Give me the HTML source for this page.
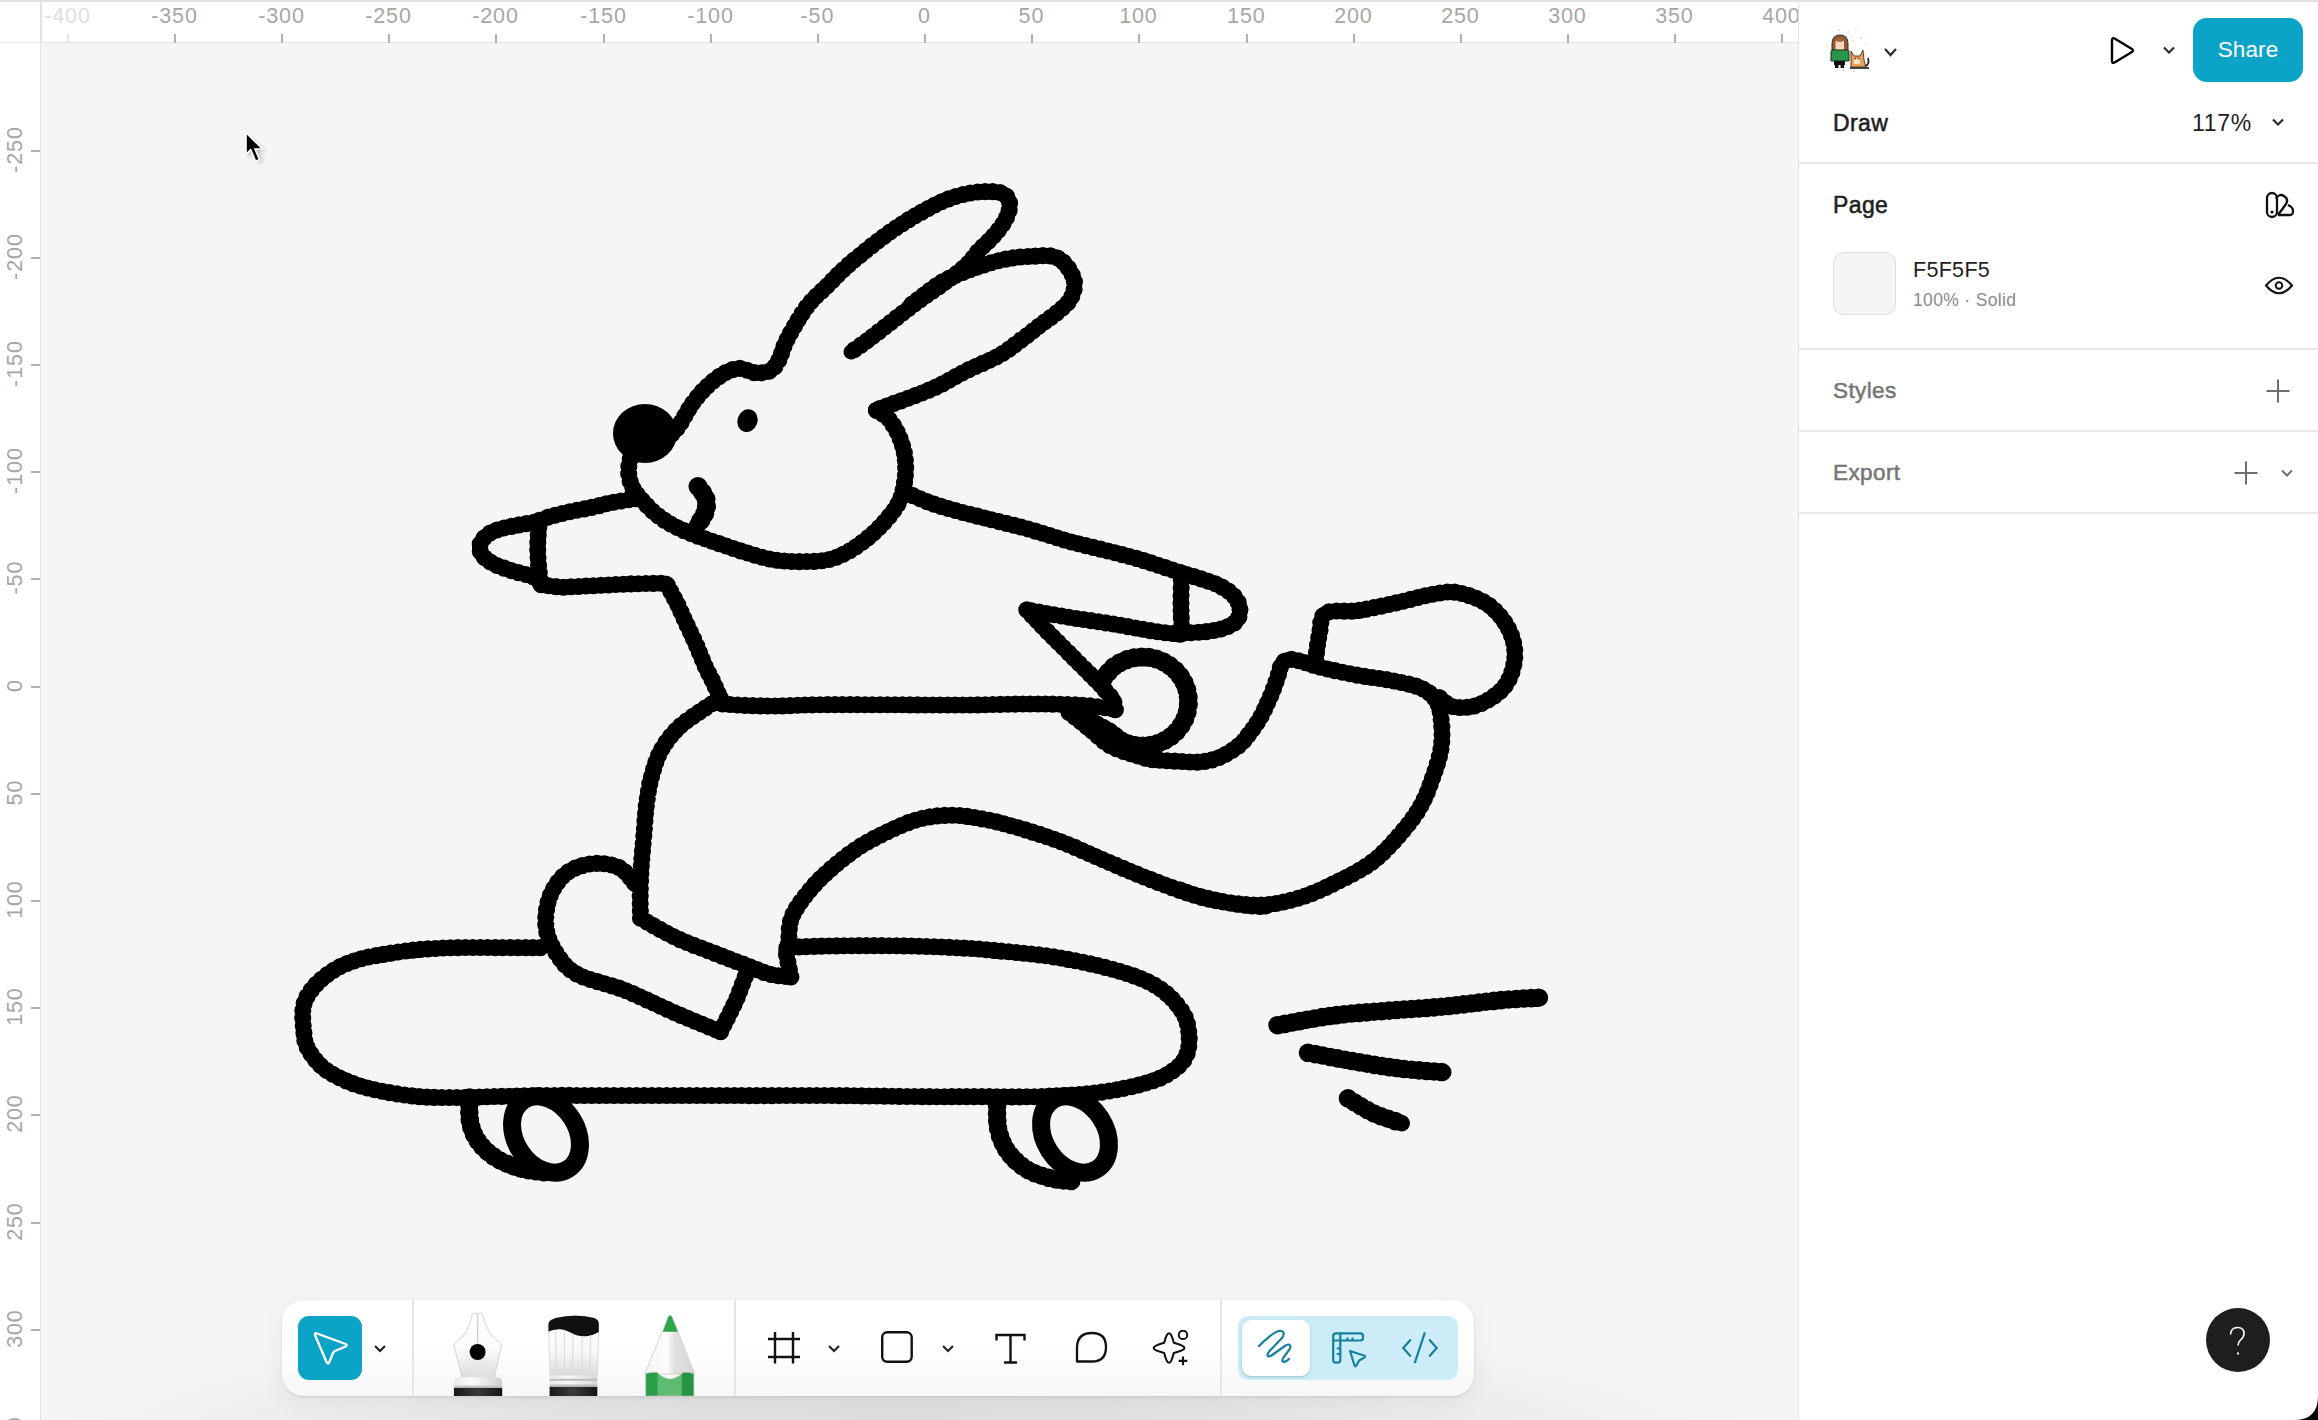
<!DOCTYPE html>
<html><head><meta charset="utf-8">
<style>
*{box-sizing:border-box;margin:0;padding:0}
html,body{width:2318px;height:1420px;overflow:hidden;background:#f5f5f5;font-family:"Liberation Sans",sans-serif;position:relative}
.abs{position:absolute}
#topline{left:0;top:0;width:2318px;height:2px;background:#e2e2e2}
#hruler{left:0;top:2px;width:1798px;height:41px;background:#fff;border-bottom:1.5px solid #e3e3e3}
#vruler{left:0;top:43px;width:41px;height:1377px;background:#fff;border-right:1.5px solid #e3e3e3}
.hl{position:absolute;top:3px;font-size:21.5px;color:#a6a6a6;transform:translateX(-50%);white-space:nowrap;line-height:22px;letter-spacing:0.9px;text-indent:0.9px}
.ht{position:absolute;top:32px;width:1.5px;height:9px;background:#b0b0b0}
.vl{position:absolute;left:15px;font-size:21.5px;color:#a6a6a6;white-space:nowrap;line-height:22px;letter-spacing:0.9px;text-indent:0.9px;transform:translate(-50%,-50%) rotate(-90deg)}
.vt{position:absolute;left:31px;height:1.5px;width:9px;background:#b0b0b0}
.draw{position:absolute;left:0;top:0}
#panel{left:1798px;top:2px;width:520px;height:1418px;background:#fff;border-left:1.5px solid #e3e3e3}
.div{position:absolute;left:0;width:520px;height:2px;background:#e8e8e8}
.ptxt{position:absolute;white-space:nowrap;line-height:1}
#toolbar{left:282px;top:1300px;width:1192px;height:96px;background:linear-gradient(#fff 45%,#f7f7f7);border-radius:22px;box-shadow:0 1px 3px rgba(0,0,0,0.10),0 6px 24px rgba(0,0,0,0.06)}
#tshadow{left:40px;top:1290px;width:1720px;height:260px;background:radial-gradient(ellipse 50% 50% at 50% 58%,rgba(0,0,0,0.11) 0%,rgba(0,0,0,0.065) 45%,rgba(0,0,0,0) 100%)}
.sb{font-weight:400;-webkit-text-stroke:0.55px currentColor}
.tdiv{position:absolute;top:0;width:1.5px;height:96px;background:#e6e6e6}
</style></head><body>
<div id="topline" class="abs"></div>
<div class="abs" style="left:40px;top:2px;width:1.5px;height:41px;background:#e3e3e3;z-index:2"></div>
<div id="hruler" class="abs">
<span class="hl" style="left:67px;color:#dedede">-400</span>
<span class="hl" style="left:174px">-350</span>
<span class="hl" style="left:281px">-300</span>
<span class="hl" style="left:388px">-250</span>
<span class="hl" style="left:495px">-200</span>
<span class="hl" style="left:603px">-150</span>
<span class="hl" style="left:710px">-100</span>
<span class="hl" style="left:817px">-50</span>
<span class="hl" style="left:924px">0</span>
<span class="hl" style="left:1031px">50</span>
<span class="hl" style="left:1138px">100</span>
<span class="hl" style="left:1246px">150</span>
<span class="hl" style="left:1353px">200</span>
<span class="hl" style="left:1460px">250</span>
<span class="hl" style="left:1567px">300</span>
<span class="hl" style="left:1674px">350</span>
<span class="hl" style="left:1781px">400</span>
<div class="ht" style="left:67px;background:#e4e4e4"></div>
<div class="ht" style="left:174px"></div>
<div class="ht" style="left:281px"></div>
<div class="ht" style="left:388px"></div>
<div class="ht" style="left:495px"></div>
<div class="ht" style="left:603px"></div>
<div class="ht" style="left:710px"></div>
<div class="ht" style="left:817px"></div>
<div class="ht" style="left:924px"></div>
<div class="ht" style="left:1031px"></div>
<div class="ht" style="left:1138px"></div>
<div class="ht" style="left:1246px"></div>
<div class="ht" style="left:1353px"></div>
<div class="ht" style="left:1460px"></div>
<div class="ht" style="left:1567px"></div>
<div class="ht" style="left:1674px"></div>
<div class="ht" style="left:1781px"></div>
</div>
<div id="vruler" class="abs">
<span class="vl" style="top:107px">-250</span>
<span class="vl" style="top:214px">-200</span>
<span class="vl" style="top:321px">-150</span>
<span class="vl" style="top:428px">-100</span>
<span class="vl" style="top:535px">-50</span>
<span class="vl" style="top:643px">0</span>
<span class="vl" style="top:750px">50</span>
<span class="vl" style="top:857px">100</span>
<span class="vl" style="top:964px">150</span>
<span class="vl" style="top:1071px">200</span>
<span class="vl" style="top:1179px">250</span>
<span class="vl" style="top:1286px">300</span>
<span class="vl" style="top:1393px">350</span>
<div class="vt" style="top:107px"></div>
<div class="vt" style="top:214px"></div>
<div class="vt" style="top:321px"></div>
<div class="vt" style="top:428px"></div>
<div class="vt" style="top:535px"></div>
<div class="vt" style="top:643px"></div>
<div class="vt" style="top:750px"></div>
<div class="vt" style="top:857px"></div>
<div class="vt" style="top:964px"></div>
<div class="vt" style="top:1071px"></div>
<div class="vt" style="top:1179px"></div>
<div class="vt" style="top:1286px"></div>
</div>

<svg class="draw" width="2318" height="1420" viewBox="0 0 2318 1420"><g fill="none" stroke="#000" stroke-linecap="round" stroke-linejoin="round"><path d="M672.0 434.0 C673.3 432.4 676.3 429.7 679.8 424.5 C683.3 419.3 688.1 409.5 692.8 403.0 C697.5 396.5 702.5 390.7 707.9 385.7 C713.3 380.7 719.7 375.7 725.1 372.8 C730.5 369.9 735.2 368.4 740.2 368.4 C745.2 368.4 750.3 372.4 755.3 372.8 C760.3 373.2 766.4 372.8 770.4 370.6 C774.4 368.4 776.5 364.5 779.0 359.8 C781.5 355.1 782.6 348.7 785.5 342.6 C788.4 336.5 792.3 329.6 796.3 323.1 C800.2 316.6 804.2 309.8 809.2 303.7 C814.2 297.6 820.8 292.2 826.5 286.5 C832.2 280.8 838.3 274.2 843.7 269.2 C849.1 264.2 852.7 261.3 858.8 256.3 C864.9 251.3 873.2 244.4 880.4 239.0 C887.6 233.6 894.8 228.6 902.0 223.9 C909.2 219.2 916.4 214.9 923.6 211.0 C930.8 207.1 937.9 203.1 945.1 200.2 C952.3 197.3 959.9 195.1 966.7 193.7 C973.5 192.3 980.0 191.6 986.1 191.6 C992.2 191.6 999.5 191.5 1003.4 193.7 C1007.3 195.8 1009.4 200.2 1009.8 204.5 C1010.1 208.8 1008.0 214.6 1005.5 219.6 C1003.0 224.6 999.0 229.7 994.7 234.7 C990.4 239.7 984.3 244.8 979.6 249.8 C974.9 254.8 972.5 259.5 966.7 264.9 C961.0 270.3 952.3 276.8 945.1 282.2 C937.9 287.6 930.1 292.6 923.6 297.3 C917.1 302.0 912.4 305.5 906.3 310.2 C900.2 314.9 893.4 320.3 886.9 325.3 C880.4 330.3 873.5 335.9 867.5 340.4 C861.5 344.8 853.8 350.1 851.0 352.0" stroke-width="14.9"/><path d="M672.0 434.0 C673.3 432.4 676.3 429.7 679.8 424.5 C683.3 419.3 688.1 409.5 692.8 403.0 C697.5 396.5 702.5 390.7 707.9 385.7 C713.3 380.7 719.7 375.7 725.1 372.8 C730.5 369.9 735.2 368.4 740.2 368.4 C745.2 368.4 750.3 372.4 755.3 372.8 C760.3 373.2 766.4 372.8 770.4 370.6 C774.4 368.4 776.5 364.5 779.0 359.8 C781.5 355.1 782.6 348.7 785.5 342.6 C788.4 336.5 792.3 329.6 796.3 323.1 C800.2 316.6 804.2 309.8 809.2 303.7 C814.2 297.6 820.8 292.2 826.5 286.5 C832.2 280.8 838.3 274.2 843.7 269.2 C849.1 264.2 852.7 261.3 858.8 256.3 C864.9 251.3 873.2 244.4 880.4 239.0 C887.6 233.6 894.8 228.6 902.0 223.9 C909.2 219.2 916.4 214.9 923.6 211.0 C930.8 207.1 937.9 203.1 945.1 200.2 C952.3 197.3 959.9 195.1 966.7 193.7 C973.5 192.3 980.0 191.6 986.1 191.6 C992.2 191.6 999.5 191.5 1003.4 193.7 C1007.3 195.8 1009.4 200.2 1009.8 204.5 C1010.1 208.8 1008.0 214.6 1005.5 219.6 C1003.0 224.6 999.0 229.7 994.7 234.7 C990.4 239.7 984.3 244.8 979.6 249.8 C974.9 254.8 972.5 259.5 966.7 264.9 C961.0 270.3 952.3 276.8 945.1 282.2 C937.9 287.6 930.1 292.6 923.6 297.3 C917.1 302.0 912.4 305.5 906.3 310.2 C900.2 314.9 893.4 320.3 886.9 325.3 C880.4 330.3 873.5 335.9 867.5 340.4 C861.5 344.8 853.8 350.1 851.0 352.0" stroke-width="17.1" stroke-dasharray="0 7.5"/>
<path d="M912.0 304.0 C917.0 300.3 932.8 287.5 941.9 282.0 C951.0 276.5 959.0 274.1 966.7 271.0 C974.4 267.9 981.1 265.6 988.3 263.5 C995.5 261.4 1002.6 259.6 1009.8 258.4 C1017.0 257.2 1024.2 256.6 1031.4 256.3 C1038.6 256.0 1047.2 254.9 1053.0 256.3 C1058.8 257.7 1062.3 260.6 1065.9 264.9 C1069.5 269.2 1073.8 276.4 1074.5 282.2 C1075.2 287.9 1073.1 294.4 1070.2 299.4 C1067.3 304.4 1062.3 308.1 1057.3 312.4 C1052.3 316.7 1046.1 320.6 1040.0 325.3 C1033.9 330.0 1027.4 335.4 1020.6 340.4 C1013.8 345.4 1008.0 350.5 999.0 355.5 C990.0 360.5 976.8 365.6 966.7 370.6 C956.7 375.6 947.7 381.4 938.7 385.7 C929.7 390.0 921.1 393.3 912.8 396.5 C904.5 399.7 895.2 402.9 889.0 405.1 C882.8 407.3 877.8 409.1 875.5 409.9" stroke-width="14.9"/><path d="M912.0 304.0 C917.0 300.3 932.8 287.5 941.9 282.0 C951.0 276.5 959.0 274.1 966.7 271.0 C974.4 267.9 981.1 265.6 988.3 263.5 C995.5 261.4 1002.6 259.6 1009.8 258.4 C1017.0 257.2 1024.2 256.6 1031.4 256.3 C1038.6 256.0 1047.2 254.9 1053.0 256.3 C1058.8 257.7 1062.3 260.6 1065.9 264.9 C1069.5 269.2 1073.8 276.4 1074.5 282.2 C1075.2 287.9 1073.1 294.4 1070.2 299.4 C1067.3 304.4 1062.3 308.1 1057.3 312.4 C1052.3 316.7 1046.1 320.6 1040.0 325.3 C1033.9 330.0 1027.4 335.4 1020.6 340.4 C1013.8 345.4 1008.0 350.5 999.0 355.5 C990.0 360.5 976.8 365.6 966.7 370.6 C956.7 375.6 947.7 381.4 938.7 385.7 C929.7 390.0 921.1 393.3 912.8 396.5 C904.5 399.7 895.2 402.9 889.0 405.1 C882.8 407.3 877.8 409.1 875.5 409.9" stroke-width="17.1" stroke-dasharray="0 7.5"/>
<path d="M630.3 459.0 C630.0 461.1 628.2 467.2 628.5 471.8 C628.8 476.4 630.0 481.9 632.1 486.5 C634.2 491.1 637.3 494.7 641.3 499.3 C645.3 503.9 650.7 509.7 655.9 514.0 C661.1 518.3 666.3 521.6 672.4 525.0 C678.5 528.4 684.9 531.1 692.5 534.1 C700.1 537.1 709.4 540.2 718.2 543.3 C727.1 546.3 736.5 549.7 745.6 552.4 C754.8 555.1 763.9 558.2 773.1 559.7 C782.3 561.2 791.5 561.6 800.6 561.6 C809.8 561.6 819.8 561.5 828.0 559.7 C836.2 557.9 843.0 554.6 850.0 550.6 C857.0 546.6 864.1 541.1 870.2 535.9 C876.3 530.7 881.7 525.3 886.6 519.5 C891.5 513.7 896.4 507.8 899.5 501.1 C902.6 494.4 904.1 486.5 905.0 479.2 C905.9 471.9 905.9 464.2 905.0 457.2 C904.1 450.2 902.2 443.5 899.5 437.1 C896.8 430.7 892.5 423.2 888.5 418.7 C884.5 414.2 877.7 411.4 875.5 409.9" stroke-width="14.9"/><path d="M630.3 459.0 C630.0 461.1 628.2 467.2 628.5 471.8 C628.8 476.4 630.0 481.9 632.1 486.5 C634.2 491.1 637.3 494.7 641.3 499.3 C645.3 503.9 650.7 509.7 655.9 514.0 C661.1 518.3 666.3 521.6 672.4 525.0 C678.5 528.4 684.9 531.1 692.5 534.1 C700.1 537.1 709.4 540.2 718.2 543.3 C727.1 546.3 736.5 549.7 745.6 552.4 C754.8 555.1 763.9 558.2 773.1 559.7 C782.3 561.2 791.5 561.6 800.6 561.6 C809.8 561.6 819.8 561.5 828.0 559.7 C836.2 557.9 843.0 554.6 850.0 550.6 C857.0 546.6 864.1 541.1 870.2 535.9 C876.3 530.7 881.7 525.3 886.6 519.5 C891.5 513.7 896.4 507.8 899.5 501.1 C902.6 494.4 904.1 486.5 905.0 479.2 C905.9 471.9 905.9 464.2 905.0 457.2 C904.1 450.2 902.2 443.5 899.5 437.1 C896.8 430.7 892.5 423.2 888.5 418.7 C884.5 414.2 877.7 411.4 875.5 409.9" stroke-width="17.1" stroke-dasharray="0 7.5"/>
<path d="M698.0 486.5 C699.3 488.6 704.8 494.6 706.0 499.0 C707.2 503.4 706.5 508.5 705.0 513.0 C703.5 517.5 698.3 523.8 697.0 526.0" stroke-width="16.9"/><path d="M698.0 486.5 C699.3 488.6 704.8 494.6 706.0 499.0 C707.2 503.4 706.5 508.5 705.0 513.0 C703.5 517.5 698.3 523.8 697.0 526.0" stroke-width="19.1" stroke-dasharray="0 7.5"/>
<path d="M635.7 498.6 C631.8 499.2 619.4 501.1 612.1 502.5 C604.8 503.9 599.1 505.7 591.8 507.3 C584.5 508.9 575.4 510.5 568.1 512.1 C560.8 513.8 553.0 515.6 547.9 517.2 C542.8 518.8 543.9 520.0 537.7 521.5 C531.5 523.0 518.3 524.8 510.7 526.5 C503.1 528.2 496.9 529.4 492.0 532.0 C487.1 534.6 482.8 538.5 481.0 542.0 C479.2 545.5 479.2 549.5 481.0 553.0 C482.8 556.5 487.0 560.1 492.0 563.0 C497.0 565.9 503.9 568.1 511.0 570.5 C518.1 572.9 529.4 574.8 534.4 577.2 C539.4 579.6 540.0 583.5 541.1 584.8" stroke-width="14.9"/><path d="M635.7 498.6 C631.8 499.2 619.4 501.1 612.1 502.5 C604.8 503.9 599.1 505.7 591.8 507.3 C584.5 508.9 575.4 510.5 568.1 512.1 C560.8 513.8 553.0 515.6 547.9 517.2 C542.8 518.8 543.9 520.0 537.7 521.5 C531.5 523.0 518.3 524.8 510.7 526.5 C503.1 528.2 496.9 529.4 492.0 532.0 C487.1 534.6 482.8 538.5 481.0 542.0 C479.2 545.5 479.2 549.5 481.0 553.0 C482.8 556.5 487.0 560.1 492.0 563.0 C497.0 565.9 503.9 568.1 511.0 570.5 C518.1 572.9 529.4 574.8 534.4 577.2 C539.4 579.6 540.0 583.5 541.1 584.8" stroke-width="17.1" stroke-dasharray="0 7.5"/>
<path d="M539.4 520.2 C539.1 524.8 537.7 538.5 537.7 547.6 C537.7 556.7 538.8 568.5 539.4 574.6 C540.0 580.7 540.8 582.5 541.1 584.1" stroke-width="14.9"/><path d="M539.4 520.2 C539.1 524.8 537.7 538.5 537.7 547.6 C537.7 556.7 538.8 568.5 539.4 574.6 C540.0 580.7 540.8 582.5 541.1 584.1" stroke-width="17.1" stroke-dasharray="0 7.5"/>
<path d="M541.1 584.8 L561.4 587.3 L595.2 585.6 L629.0 583.9 L666.2 583.1 L676.3 601.7 L686.4 623.6 L696.6 645.6 L705.0 665.9 L713.5 682.8 L720.2 698.0" stroke-width="14.9"/><path d="M541.1 584.8 L561.4 587.3 L595.2 585.6 L629.0 583.9 L666.2 583.1 L676.3 601.7 L686.4 623.6 L696.6 645.6 L705.0 665.9 L713.5 682.8 L720.2 698.0" stroke-width="17.1" stroke-dasharray="0 7.5"/>
<path d="M906.3 492.7 C909.9 494.2 920.7 499.3 928.0 502.0 C935.3 504.7 940.6 506.3 950.0 509.0 C959.4 511.7 971.7 514.7 984.5 518.0 C997.3 521.3 1012.7 524.7 1026.8 528.6 C1040.9 532.5 1054.9 537.4 1069.0 541.3 C1083.1 545.2 1099.0 548.6 1111.3 551.8 C1123.6 555.0 1131.7 556.9 1143.0 560.3 C1154.3 563.7 1169.4 569.0 1178.9 572.0 C1188.4 575.0 1193.5 576.3 1200.0 578.5 C1206.5 580.7 1212.7 582.4 1218.0 585.0 C1223.3 587.6 1228.4 590.5 1232.0 594.0 C1235.6 597.5 1238.5 601.8 1239.5 606.0 C1240.5 610.2 1240.1 615.5 1238.0 619.0 C1235.9 622.5 1232.0 624.9 1226.9 627.0 C1221.8 629.1 1214.8 630.5 1207.5 631.5 C1200.2 632.5 1187.1 632.8 1183.0 633.0" stroke-width="14.9"/><path d="M906.3 492.7 C909.9 494.2 920.7 499.3 928.0 502.0 C935.3 504.7 940.6 506.3 950.0 509.0 C959.4 511.7 971.7 514.7 984.5 518.0 C997.3 521.3 1012.7 524.7 1026.8 528.6 C1040.9 532.5 1054.9 537.4 1069.0 541.3 C1083.1 545.2 1099.0 548.6 1111.3 551.8 C1123.6 555.0 1131.7 556.9 1143.0 560.3 C1154.3 563.7 1169.4 569.0 1178.9 572.0 C1188.4 575.0 1193.5 576.3 1200.0 578.5 C1206.5 580.7 1212.7 582.4 1218.0 585.0 C1223.3 587.6 1228.4 590.5 1232.0 594.0 C1235.6 597.5 1238.5 601.8 1239.5 606.0 C1240.5 610.2 1240.1 615.5 1238.0 619.0 C1235.9 622.5 1232.0 624.9 1226.9 627.0 C1221.8 629.1 1214.8 630.5 1207.5 631.5 C1200.2 632.5 1187.1 632.8 1183.0 633.0" stroke-width="17.1" stroke-dasharray="0 7.5"/>
<path d="M1181.5 573.0 C1181.4 578.6 1180.9 596.6 1181.0 606.8 C1181.1 617.0 1181.8 629.7 1182.0 634.3" stroke-width="14.9"/><path d="M1181.5 573.0 C1181.4 578.6 1180.9 596.6 1181.0 606.8 C1181.1 617.0 1181.8 629.7 1182.0 634.3" stroke-width="17.1" stroke-dasharray="0 7.5"/>
<path d="M1180.0 634.3 C1175.6 633.8 1165.0 632.9 1153.5 631.1 C1142.0 629.3 1125.4 626.0 1111.3 623.7 C1097.2 621.4 1083.1 619.6 1069.0 617.3 C1054.9 615.0 1033.8 611.1 1026.8 609.9" stroke-width="14.9"/><path d="M1180.0 634.3 C1175.6 633.8 1165.0 632.9 1153.5 631.1 C1142.0 629.3 1125.4 626.0 1111.3 623.7 C1097.2 621.4 1083.1 619.6 1069.0 617.3 C1054.9 615.0 1033.8 611.1 1026.8 609.9" stroke-width="17.1" stroke-dasharray="0 7.5"/>
<path d="M1026.8 609.9 L1047.9 632.1 L1073.3 657.5 L1098.6 682.8 L1113.4 699.7 L1115.5 710.3" stroke-width="14.9"/><path d="M1026.8 609.9 L1047.9 632.1 L1073.3 657.5 L1098.6 682.8 L1113.4 699.7 L1115.5 710.3" stroke-width="17.1" stroke-dasharray="0 7.5"/>
<path d="M720.2 698.0 C719.8 698.9 710.1 702.1 718.0 703.4 C725.9 704.7 750.6 705.8 767.5 706.0 C784.4 706.2 800.9 704.9 819.6 704.7 C838.4 704.5 856.0 704.7 880.0 704.7 C904.0 704.8 938.9 705.1 963.4 705.0 C987.9 704.9 1007.4 704.0 1026.8 704.0 C1046.2 704.0 1064.8 704.1 1079.6 705.0 C1094.4 705.9 1109.5 708.5 1115.5 709.2" stroke-width="14.9"/><path d="M720.2 698.0 C719.8 698.9 710.1 702.1 718.0 703.4 C725.9 704.7 750.6 705.8 767.5 706.0 C784.4 706.2 800.9 704.9 819.6 704.7 C838.4 704.5 856.0 704.7 880.0 704.7 C904.0 704.8 938.9 705.1 963.4 705.0 C987.9 704.9 1007.4 704.0 1026.8 704.0 C1046.2 704.0 1064.8 704.1 1079.6 705.0 C1094.4 705.9 1109.5 708.5 1115.5 709.2" stroke-width="17.1" stroke-dasharray="0 7.5"/>
<path d="M1103.5 677.9 C1105.5 675.8 1110.8 668.8 1115.5 665.5 C1120.2 662.2 1125.8 659.6 1131.4 658.3 C1137.0 656.9 1143.2 656.6 1148.9 657.4 C1154.6 658.2 1160.5 660.2 1165.5 663.0 C1170.5 665.8 1175.2 669.7 1178.7 674.1 C1182.2 678.5 1185.1 683.9 1186.7 689.2 C1188.3 694.6 1188.8 700.7 1188.2 706.2 C1187.6 711.7 1185.8 717.5 1183.1 722.4 C1180.4 727.3 1176.5 732.0 1172.1 735.6 C1167.7 739.2 1162.2 742.1 1156.7 743.8 C1151.2 745.5 1145.0 746.3 1139.3 745.9 C1133.6 745.5 1127.5 743.9 1122.3 741.5 C1117.1 739.1 1115.4 735.5 1108.3 731.3 C1101.2 727.0 1084.4 718.5 1079.6 716.0" stroke-width="16.9"/><path d="M1103.5 677.9 C1105.5 675.8 1110.8 668.8 1115.5 665.5 C1120.2 662.2 1125.8 659.6 1131.4 658.3 C1137.0 656.9 1143.2 656.6 1148.9 657.4 C1154.6 658.2 1160.5 660.2 1165.5 663.0 C1170.5 665.8 1175.2 669.7 1178.7 674.1 C1182.2 678.5 1185.1 683.9 1186.7 689.2 C1188.3 694.6 1188.8 700.7 1188.2 706.2 C1187.6 711.7 1185.8 717.5 1183.1 722.4 C1180.4 727.3 1176.5 732.0 1172.1 735.6 C1167.7 739.2 1162.2 742.1 1156.7 743.8 C1151.2 745.5 1145.0 746.3 1139.3 745.9 C1133.6 745.5 1127.5 743.9 1122.3 741.5 C1117.1 739.1 1115.4 735.5 1108.3 731.3 C1101.2 727.0 1084.4 718.5 1079.6 716.0" stroke-width="19.1" stroke-dasharray="0 7.5"/>
<path d="M1069.0 712.4 C1072.5 715.2 1083.2 723.7 1090.2 729.3 C1097.2 734.9 1102.5 741.5 1111.3 746.2 C1120.1 750.9 1134.9 755.1 1143.0 757.5 C1151.1 759.9 1153.9 759.7 1160.0 760.3 C1166.1 760.9 1173.1 761.0 1179.7 761.3 C1186.3 761.6 1192.8 762.6 1199.4 762.0 C1206.0 761.4 1212.6 760.2 1219.2 757.5 C1225.8 754.8 1233.9 749.5 1238.9 745.5 C1244.0 741.5 1246.1 737.9 1249.5 733.5 C1252.9 729.1 1256.5 724.1 1259.5 719.0 C1262.5 713.9 1265.2 708.0 1267.5 703.0 C1269.8 698.0 1271.7 693.8 1273.5 689.0 C1275.3 684.2 1277.1 678.8 1278.5 674.5 C1279.9 670.2 1280.2 666.0 1282.0 663.5 C1283.8 661.0 1286.5 659.9 1289.5 659.5 C1292.5 659.1 1294.6 659.6 1300.0 661.0 C1305.4 662.4 1312.4 665.2 1322.0 667.6 C1331.6 670.0 1346.1 673.1 1357.5 675.2 C1368.9 677.3 1379.8 678.2 1390.4 680.3 C1401.0 682.4 1413.3 684.5 1420.9 687.9 C1428.5 691.3 1432.7 695.3 1436.1 700.6 C1439.5 705.9 1440.3 711.8 1441.2 719.6 C1442.1 727.4 1442.5 738.2 1441.2 747.5 C1439.9 756.8 1436.9 765.7 1433.5 775.4 C1430.1 785.1 1426.4 796.1 1420.9 805.8 C1415.4 815.5 1408.6 824.4 1400.6 833.7 C1392.6 843.0 1383.3 853.6 1372.7 861.6 C1362.1 869.6 1349.0 876.0 1337.2 881.9 C1325.4 887.8 1313.5 893.3 1301.7 897.1 C1289.9 900.9 1278.0 903.7 1266.2 904.7 C1254.4 905.7 1241.7 904.3 1230.7 903.0 C1219.7 901.7 1208.8 899.2 1200.3 897.0 C1191.8 894.8 1183.4 891.2 1180.0 890.0" stroke-width="14.9"/><path d="M1069.0 712.4 C1072.5 715.2 1083.2 723.7 1090.2 729.3 C1097.2 734.9 1102.5 741.5 1111.3 746.2 C1120.1 750.9 1134.9 755.1 1143.0 757.5 C1151.1 759.9 1153.9 759.7 1160.0 760.3 C1166.1 760.9 1173.1 761.0 1179.7 761.3 C1186.3 761.6 1192.8 762.6 1199.4 762.0 C1206.0 761.4 1212.6 760.2 1219.2 757.5 C1225.8 754.8 1233.9 749.5 1238.9 745.5 C1244.0 741.5 1246.1 737.9 1249.5 733.5 C1252.9 729.1 1256.5 724.1 1259.5 719.0 C1262.5 713.9 1265.2 708.0 1267.5 703.0 C1269.8 698.0 1271.7 693.8 1273.5 689.0 C1275.3 684.2 1277.1 678.8 1278.5 674.5 C1279.9 670.2 1280.2 666.0 1282.0 663.5 C1283.8 661.0 1286.5 659.9 1289.5 659.5 C1292.5 659.1 1294.6 659.6 1300.0 661.0 C1305.4 662.4 1312.4 665.2 1322.0 667.6 C1331.6 670.0 1346.1 673.1 1357.5 675.2 C1368.9 677.3 1379.8 678.2 1390.4 680.3 C1401.0 682.4 1413.3 684.5 1420.9 687.9 C1428.5 691.3 1432.7 695.3 1436.1 700.6 C1439.5 705.9 1440.3 711.8 1441.2 719.6 C1442.1 727.4 1442.5 738.2 1441.2 747.5 C1439.9 756.8 1436.9 765.7 1433.5 775.4 C1430.1 785.1 1426.4 796.1 1420.9 805.8 C1415.4 815.5 1408.6 824.4 1400.6 833.7 C1392.6 843.0 1383.3 853.6 1372.7 861.6 C1362.1 869.6 1349.0 876.0 1337.2 881.9 C1325.4 887.8 1313.5 893.3 1301.7 897.1 C1289.9 900.9 1278.0 903.7 1266.2 904.7 C1254.4 905.7 1241.7 904.3 1230.7 903.0 C1219.7 901.7 1208.8 899.2 1200.3 897.0 C1191.8 894.8 1183.4 891.2 1180.0 890.0" stroke-width="17.1" stroke-dasharray="0 7.5"/>
<path d="M1315.6 660.0 C1316.2 655.6 1317.8 641.2 1319.5 633.4 C1321.2 625.6 1319.5 616.9 1325.8 613.1 C1332.1 609.3 1345.9 612.3 1357.5 610.6 C1369.1 608.9 1382.8 605.8 1395.5 603.0 C1408.2 600.2 1422.9 595.8 1433.5 594.1 C1444.1 592.4 1449.6 590.9 1458.9 592.8 C1468.2 594.7 1480.8 599.1 1489.3 605.5 C1497.8 611.9 1505.4 622.0 1509.6 630.9 C1513.8 639.8 1515.5 649.4 1514.7 658.7 C1513.9 668.0 1510.4 679.0 1504.5 686.6 C1498.6 694.2 1487.7 701.0 1479.2 704.4 C1470.8 707.8 1460.6 708.2 1453.8 706.9 C1447.0 705.6 1441.1 698.5 1438.6 696.8" stroke-width="14.9"/><path d="M1315.6 660.0 C1316.2 655.6 1317.8 641.2 1319.5 633.4 C1321.2 625.6 1319.5 616.9 1325.8 613.1 C1332.1 609.3 1345.9 612.3 1357.5 610.6 C1369.1 608.9 1382.8 605.8 1395.5 603.0 C1408.2 600.2 1422.9 595.8 1433.5 594.1 C1444.1 592.4 1449.6 590.9 1458.9 592.8 C1468.2 594.7 1480.8 599.1 1489.3 605.5 C1497.8 611.9 1505.4 622.0 1509.6 630.9 C1513.8 639.8 1515.5 649.4 1514.7 658.7 C1513.9 668.0 1510.4 679.0 1504.5 686.6 C1498.6 694.2 1487.7 701.0 1479.2 704.4 C1470.8 707.8 1460.6 708.2 1453.8 706.9 C1447.0 705.6 1441.1 698.5 1438.6 696.8" stroke-width="17.1" stroke-dasharray="0 7.5"/>
<path d="M788.6 943.9 C789.0 940.0 788.6 927.4 790.8 920.2 C793.0 913.0 796.2 908.2 801.6 900.8 C807.0 893.4 814.1 884.5 823.1 876.0 C832.1 867.5 844.7 856.9 855.5 849.5 C866.3 842.1 877.1 836.6 887.9 831.5 C898.7 826.4 909.4 821.5 920.2 818.8 C931.0 816.1 941.8 815.1 952.6 815.2 C963.4 815.3 974.1 817.4 984.9 819.4 C995.7 821.4 1004.7 823.8 1017.3 827.5 C1029.9 831.2 1046.0 836.1 1060.4 841.5 C1074.8 846.9 1089.2 853.9 1103.6 860.0 C1118.0 866.1 1132.3 872.4 1146.7 878.0 C1161.1 883.6 1175.4 889.2 1189.8 893.5 C1204.2 897.8 1220.3 901.2 1233.0 903.5 C1245.7 905.8 1260.7 906.4 1266.2 907.0" stroke-width="14.9"/><path d="M788.6 943.9 C789.0 940.0 788.6 927.4 790.8 920.2 C793.0 913.0 796.2 908.2 801.6 900.8 C807.0 893.4 814.1 884.5 823.1 876.0 C832.1 867.5 844.7 856.9 855.5 849.5 C866.3 842.1 877.1 836.6 887.9 831.5 C898.7 826.4 909.4 821.5 920.2 818.8 C931.0 816.1 941.8 815.1 952.6 815.2 C963.4 815.3 974.1 817.4 984.9 819.4 C995.7 821.4 1004.7 823.8 1017.3 827.5 C1029.9 831.2 1046.0 836.1 1060.4 841.5 C1074.8 846.9 1089.2 853.9 1103.6 860.0 C1118.0 866.1 1132.3 872.4 1146.7 878.0 C1161.1 883.6 1175.4 889.2 1189.8 893.5 C1204.2 897.8 1220.3 901.2 1233.0 903.5 C1245.7 905.8 1260.7 906.4 1266.2 907.0" stroke-width="17.1" stroke-dasharray="0 7.5"/>
<path d="M718.0 700.0 C715.7 701.5 710.8 704.2 704.3 708.7 C697.8 713.2 686.5 720.0 679.3 726.9 C672.1 733.8 665.7 742.0 661.1 750.3 C656.5 758.5 654.1 767.3 651.6 776.4 C649.1 785.5 647.7 795.0 646.4 805.0 C645.1 815.0 644.7 825.9 643.8 836.3 C642.9 846.7 641.8 857.5 641.2 867.5 C640.6 877.5 640.3 887.7 640.2 896.2 C640.1 904.7 640.5 914.6 640.5 918.3" stroke-width="14.9"/><path d="M718.0 700.0 C715.7 701.5 710.8 704.2 704.3 708.7 C697.8 713.2 686.5 720.0 679.3 726.9 C672.1 733.8 665.7 742.0 661.1 750.3 C656.5 758.5 654.1 767.3 651.6 776.4 C649.1 785.5 647.7 795.0 646.4 805.0 C645.1 815.0 644.7 825.9 643.8 836.3 C642.9 846.7 641.8 857.5 641.2 867.5 C640.6 877.5 640.3 887.7 640.2 896.2 C640.1 904.7 640.5 914.6 640.5 918.3" stroke-width="17.1" stroke-dasharray="0 7.5"/>
<path d="M640.5 918.3 C646.5 921.6 663.8 932.0 676.3 937.9 C688.8 943.8 703.2 948.7 715.4 953.5 C727.5 958.3 740.1 963.0 749.2 966.5 C758.3 970.0 763.2 972.5 770.1 974.3 C777.0 976.0 787.4 976.5 790.9 977.0" stroke-width="14.9"/><path d="M640.5 918.3 C646.5 921.6 663.8 932.0 676.3 937.9 C688.8 943.8 703.2 948.7 715.4 953.5 C727.5 958.3 740.1 963.0 749.2 966.5 C758.3 970.0 763.2 972.5 770.1 974.3 C777.0 976.0 787.4 976.5 790.9 977.0" stroke-width="17.1" stroke-dasharray="0 7.5"/>
<path d="M790.9 977.0 L785.7 950.9 L788.6 943.9" stroke-width="14.9"/><path d="M790.9 977.0 L785.7 950.9 L788.6 943.9" stroke-width="17.1" stroke-dasharray="0 7.5"/>
<path d="M634.6 883.2 C632.0 880.6 626.0 870.8 619.0 867.5 C612.0 864.2 601.6 862.7 592.9 863.6 C584.2 864.5 574.0 867.4 566.9 872.8 C559.8 878.2 553.5 887.1 550.0 896.2 C546.5 905.3 544.9 918.0 546.0 927.5 C547.1 937.0 551.3 945.7 556.5 953.5 C561.7 961.3 566.0 968.2 577.3 974.3 C588.6 980.4 607.7 983.5 624.2 990.0 C640.7 996.5 660.2 1006.4 676.3 1013.4 C692.4 1020.4 713.2 1028.7 720.6 1031.7" stroke-width="14.9"/><path d="M634.6 883.2 C632.0 880.6 626.0 870.8 619.0 867.5 C612.0 864.2 601.6 862.7 592.9 863.6 C584.2 864.5 574.0 867.4 566.9 872.8 C559.8 878.2 553.5 887.1 550.0 896.2 C546.5 905.3 544.9 918.0 546.0 927.5 C547.1 937.0 551.3 945.7 556.5 953.5 C561.7 961.3 566.0 968.2 577.3 974.3 C588.6 980.4 607.7 983.5 624.2 990.0 C640.7 996.5 660.2 1006.4 676.3 1013.4 C692.4 1020.4 713.2 1028.7 720.6 1031.7" stroke-width="17.1" stroke-dasharray="0 7.5"/>
<path d="M720.6 1031.7 L736.2 1000.4 L749.2 966.5" stroke-width="14.9"/><path d="M720.6 1031.7 L736.2 1000.4 L749.2 966.5" stroke-width="17.1" stroke-dasharray="0 7.5"/>
<path d="M540.4 947.6 C533.2 947.6 510.8 947.6 497.0 947.6 C483.2 947.6 470.6 947.3 457.5 947.6 C444.4 947.9 429.6 948.6 418.1 949.6 C406.6 950.6 398.4 951.9 388.5 953.5 C378.6 955.1 367.8 956.8 358.9 959.4 C350.0 962.0 342.4 965.0 335.2 969.3 C328.0 973.6 320.8 979.2 315.5 985.1 C310.2 991.0 305.7 997.2 303.7 1004.8 C301.7 1012.4 303.0 1023.3 303.7 1030.5 C304.4 1037.7 304.3 1042.0 307.6 1048.2 C310.9 1054.5 316.5 1062.4 323.4 1068.0 C330.3 1073.6 339.8 1078.2 349.0 1082.0 C358.2 1085.8 367.1 1088.1 378.6 1090.5 C390.1 1092.9 405.0 1095.3 418.1 1096.5 C431.2 1097.7 444.4 1097.5 457.5 1097.5 C470.6 1097.5 482.2 1096.8 497.0 1096.5 C511.8 1096.2 529.9 1095.7 546.3 1095.5 C562.7 1095.3 577.5 1095.5 595.6 1095.5 C613.7 1095.5 634.0 1095.5 654.7 1095.5 C675.4 1095.5 702.5 1095.5 720.0 1095.5 C737.5 1095.5 740.1 1095.6 760.0 1095.6 C779.9 1095.6 812.9 1095.4 839.4 1095.6 C865.9 1095.8 895.6 1096.4 918.8 1096.6 C941.9 1096.8 958.5 1096.6 978.3 1096.6 C998.1 1096.6 1017.9 1097.2 1037.8 1096.6 C1057.7 1095.9 1079.2 1095.0 1097.4 1092.7 C1115.6 1090.4 1134.4 1086.4 1147.0 1082.7 C1159.6 1079.0 1166.2 1075.4 1172.8 1070.8 C1179.4 1066.2 1184.0 1061.5 1186.7 1054.9 C1189.4 1048.3 1189.7 1038.7 1188.7 1031.1 C1187.7 1023.5 1186.0 1016.7 1180.7 1009.3 C1175.4 1001.9 1167.5 993.0 1156.9 986.5 C1146.3 980.0 1133.7 975.4 1117.2 970.6 C1100.7 965.8 1077.5 960.8 1057.7 957.5 C1037.9 954.2 1014.6 952.4 998.1 950.8 C981.6 949.2 975.0 948.6 958.5 947.8 C942.0 947.0 918.8 946.1 898.9 945.8 C879.0 945.5 857.0 945.6 839.4 945.8 C821.8 946.0 801.1 946.8 793.5 947.0" stroke-width="14.9"/><path d="M540.4 947.6 C533.2 947.6 510.8 947.6 497.0 947.6 C483.2 947.6 470.6 947.3 457.5 947.6 C444.4 947.9 429.6 948.6 418.1 949.6 C406.6 950.6 398.4 951.9 388.5 953.5 C378.6 955.1 367.8 956.8 358.9 959.4 C350.0 962.0 342.4 965.0 335.2 969.3 C328.0 973.6 320.8 979.2 315.5 985.1 C310.2 991.0 305.7 997.2 303.7 1004.8 C301.7 1012.4 303.0 1023.3 303.7 1030.5 C304.4 1037.7 304.3 1042.0 307.6 1048.2 C310.9 1054.5 316.5 1062.4 323.4 1068.0 C330.3 1073.6 339.8 1078.2 349.0 1082.0 C358.2 1085.8 367.1 1088.1 378.6 1090.5 C390.1 1092.9 405.0 1095.3 418.1 1096.5 C431.2 1097.7 444.4 1097.5 457.5 1097.5 C470.6 1097.5 482.2 1096.8 497.0 1096.5 C511.8 1096.2 529.9 1095.7 546.3 1095.5 C562.7 1095.3 577.5 1095.5 595.6 1095.5 C613.7 1095.5 634.0 1095.5 654.7 1095.5 C675.4 1095.5 702.5 1095.5 720.0 1095.5 C737.5 1095.5 740.1 1095.6 760.0 1095.6 C779.9 1095.6 812.9 1095.4 839.4 1095.6 C865.9 1095.8 895.6 1096.4 918.8 1096.6 C941.9 1096.8 958.5 1096.6 978.3 1096.6 C998.1 1096.6 1017.9 1097.2 1037.8 1096.6 C1057.7 1095.9 1079.2 1095.0 1097.4 1092.7 C1115.6 1090.4 1134.4 1086.4 1147.0 1082.7 C1159.6 1079.0 1166.2 1075.4 1172.8 1070.8 C1179.4 1066.2 1184.0 1061.5 1186.7 1054.9 C1189.4 1048.3 1189.7 1038.7 1188.7 1031.1 C1187.7 1023.5 1186.0 1016.7 1180.7 1009.3 C1175.4 1001.9 1167.5 993.0 1156.9 986.5 C1146.3 980.0 1133.7 975.4 1117.2 970.6 C1100.7 965.8 1077.5 960.8 1057.7 957.5 C1037.9 954.2 1014.6 952.4 998.1 950.8 C981.6 949.2 975.0 948.6 958.5 947.8 C942.0 947.0 918.8 946.1 898.9 945.8 C879.0 945.5 857.0 945.6 839.4 945.8 C821.8 946.0 801.1 946.8 793.5 947.0" stroke-width="17.1" stroke-dasharray="0 7.5"/>
<path d="M469.3 1097.5 C469.5 1101.8 468.7 1115.6 470.3 1123.2 C471.9 1130.8 474.8 1137.0 479.2 1142.9 C483.6 1148.8 490.1 1154.4 497.0 1158.7 C503.9 1163.0 512.4 1166.2 520.6 1168.5 C528.8 1170.8 542.0 1171.8 546.3 1172.5" stroke-width="16.4"/><path d="M469.3 1097.5 C469.5 1101.8 468.7 1115.6 470.3 1123.2 C471.9 1130.8 474.8 1137.0 479.2 1142.9 C483.6 1148.8 490.1 1154.4 497.0 1158.7 C503.9 1163.0 512.4 1166.2 520.6 1168.5 C528.8 1170.8 542.0 1171.8 546.3 1172.5" stroke-width="18.6" stroke-dasharray="0 7.5"/>
<path d="M997.2 1098.6 C997.4 1103.6 996.3 1119.5 998.1 1128.4 C999.9 1137.3 1003.1 1145.3 1008.1 1152.2 C1013.1 1159.1 1020.3 1165.5 1027.9 1170.0 C1035.5 1174.5 1046.4 1177.2 1053.7 1179.0 C1061.0 1180.8 1068.6 1180.7 1071.6 1181.0" stroke-width="16.4"/><path d="M997.2 1098.6 C997.4 1103.6 996.3 1119.5 998.1 1128.4 C999.9 1137.3 1003.1 1145.3 1008.1 1152.2 C1013.1 1159.1 1020.3 1165.5 1027.9 1170.0 C1035.5 1174.5 1046.4 1177.2 1053.7 1179.0 C1061.0 1180.8 1068.6 1180.7 1071.6 1181.0" stroke-width="18.6" stroke-dasharray="0 7.5"/>
<path d="M1277.6 1025.2 C1286.8 1023.6 1314.4 1018.0 1332.8 1015.6 C1351.2 1013.2 1369.6 1012.2 1388.0 1010.7 C1406.4 1009.2 1424.9 1008.3 1443.3 1006.6 C1461.7 1004.9 1482.4 1001.9 1498.5 1000.4 C1514.6 998.9 1533.0 998.1 1539.9 997.6" stroke-width="16.4"/><path d="M1277.6 1025.2 C1286.8 1023.6 1314.4 1018.0 1332.8 1015.6 C1351.2 1013.2 1369.6 1012.2 1388.0 1010.7 C1406.4 1009.2 1424.9 1008.3 1443.3 1006.6 C1461.7 1004.9 1482.4 1001.9 1498.5 1000.4 C1514.6 998.9 1533.0 998.1 1539.9 997.6" stroke-width="18.6" stroke-dasharray="0 7.5"/>
<path d="M1308.0 1052.8 C1316.7 1054.4 1344.8 1059.8 1360.4 1062.5 C1376.0 1065.2 1388.0 1067.1 1401.8 1068.7 C1415.6 1070.3 1436.4 1071.6 1443.3 1072.2" stroke-width="16.4"/><path d="M1308.0 1052.8 C1316.7 1054.4 1344.8 1059.8 1360.4 1062.5 C1376.0 1065.2 1388.0 1067.1 1401.8 1068.7 C1415.6 1070.3 1436.4 1071.6 1443.3 1072.2" stroke-width="18.6" stroke-dasharray="0 7.5"/>
<path d="M1348.0 1098.4 C1352.4 1100.9 1365.2 1109.5 1374.2 1113.6 C1383.2 1117.7 1397.2 1121.6 1401.8 1123.2" stroke-width="16.4"/><path d="M1348.0 1098.4 C1352.4 1100.9 1365.2 1109.5 1374.2 1113.6 C1383.2 1117.7 1397.2 1121.6 1401.8 1123.2" stroke-width="18.6" stroke-dasharray="0 7.5"/>
<ellipse cx="645" cy="433.4" rx="32" ry="29.5" fill="#000" stroke="none"/>
<ellipse cx="747.5" cy="420.6" rx="10" ry="11.5" fill="#000" stroke="none" transform="rotate(20 747.5 420.6)"/>
<ellipse cx="546" cy="1134.5" rx="30.5" ry="41" stroke-width="18" transform="rotate(-33 546 1134.5)"/>
<ellipse cx="1075" cy="1134.5" rx="30.5" ry="41" stroke-width="18" transform="rotate(-33 1075 1134.5)"/>
</g></svg>

<!-- cursor -->
<svg class="abs" style="left:236px;top:124px" width="40" height="48" viewBox="236 124 40 48">
<defs><filter id="cs" x="-50%" y="-50%" width="200%" height="200%"><feGaussianBlur stdDeviation="2"/></filter></defs>
<path d="M248 136 L248 158 L254 152 L259 163 L263 161 L258 151 L266 151 Z" fill="#000" opacity="0.25" filter="url(#cs)"/>
<path d="M246 132.7 L246 154.2 L250.7 149.6 L255.6 161.2 L259.5 159.6 L255 149 L262.3 148.7 Z" fill="#000" stroke="#fff" stroke-width="1.6" stroke-linejoin="miter"/>
</svg>

<div id="panel" class="abs">
<!-- avatar -->
<svg class="abs" style="left:24px;top:22px" width="52" height="52" viewBox="0 0 52 52">
<g fill="#f0c9a4" opacity="0.55"><circle cx="16" cy="6" r="1.2"/><circle cx="25" cy="8" r="1.3"/><circle cx="33" cy="6" r="1"/><circle cx="38" cy="14" r="1.3"/><circle cx="30" cy="17" r="1.2"/><circle cx="44" cy="20" r="1"/><circle cx="42" cy="30" r="1.2"/><circle cx="5" cy="22" r="1"/><circle cx="6" cy="36" r="1.1"/><circle cx="20" cy="46" r="1.2"/><circle cx="31" cy="47" r="1.3"/><circle cx="28" cy="12" r="1"/></g>
<path d="M9 20 Q9 11 17 11 Q25 11 25 20 L25 27 L9 27 Z" fill="#8f5a34" stroke="#3b2a20" stroke-width="1"/>
<rect x="12.5" y="17" width="8.5" height="9" fill="#f6d5bf"/>
<rect x="14" y="15" width="5" height="3" fill="#a86d40"/>
<path d="M8 28 Q8 26 10 26 L24 26 Q26 26 26 28 L26 37 L8 37 Z" fill="#27964a" stroke="#1f2d24" stroke-width="1"/>
<rect x="11" y="37" width="11" height="4" fill="#111"/>
<rect x="12" y="41" width="3.5" height="3" fill="#111"/><rect x="17.5" y="41" width="3.5" height="3" fill="#111"/>
<path d="M28 27 L31 32 L37 32 L40 26 L41 36 L43 43 L28 43 Z" fill="#e8a15e" stroke="#5a2e14" stroke-width="0.9"/>
<rect x="31" y="35" width="6" height="5" fill="#fbe3c8"/>
<rect x="31.5" y="34" width="1.5" height="1.3" fill="#5a2e14"/><rect x="35" y="34" width="1.5" height="1.3" fill="#5a2e14"/>
<rect x="27" y="43" width="19" height="2" fill="#444"/>
<path d="M42 42 Q47 41 45 34" stroke="#222" stroke-width="1.8" fill="none"/>
</svg>
<svg class="abs" style="left:84px;top:44px" width="16" height="12" viewBox="0 0 16 12"><path d="M2 3 L7.5 9 L13 3" fill="none" stroke="#2c2c2c" stroke-width="2.2"/></svg>
<!-- play -->
<svg class="abs" style="left:308px;top:32px" width="34" height="34" viewBox="0 0 34 34"><path d="M5 6.5 Q5 3 8 4.8 L24.5 14.7 Q27.5 16.5 24.5 18.3 L8 28.2 Q5 30 5 26.5 Z" fill="none" stroke="#000" stroke-width="2.4" stroke-linejoin="round"/></svg>
<svg class="abs" style="left:363px;top:42px" width="14" height="12" viewBox="0 0 14 12"><path d="M2 3.5 L7 8.5 L12 3.5" fill="none" stroke="#2c2c2c" stroke-width="2.2"/></svg>
<div class="abs" style="left:394px;top:16px;width:110px;height:64px;border-radius:14px;background:#0ca4c6"></div>
<div class="ptxt" style="left:394px;top:16px;width:110px;height:64px;line-height:64px;text-align:center;color:#fff;font-size:22.5px;font-weight:400;letter-spacing:0.1px">Share</div>
<div class="ptxt sb" style="left:34px;top:109.5px;font-size:23px;color:#1e1e1e;letter-spacing:0.4px">Draw</div>
<div class="ptxt" style="left:393px;top:110px;font-size:23px;color:#1e1e1e;letter-spacing:0.7px">117%</div>
<svg class="abs" style="left:472px;top:114px" width="14" height="12" viewBox="0 0 14 12"><path d="M2 3.5 L7 8.5 L12 3.5" fill="none" stroke="#2c2c2c" stroke-width="2.2"/></svg>
<div class="div" style="top:160px"></div>
<div class="ptxt sb" style="left:34px;top:192px;font-size:23px;color:#1e1e1e;letter-spacing:0.4px">Page</div>
<svg class="abs" style="left:464px;top:186px" width="32" height="32" viewBox="0 0 32 32"><g fill="none" stroke="#111" stroke-width="2.3" stroke-linejoin="round"><rect x="4" y="5" width="10" height="24" rx="5"/><path d="M13 11 Q16 5 21 8 Q26 11 23 16 L15 27"/><path d="M15 27 L27 27 Q30 27 30 23 Q30 19 25 17"/></g><circle cx="9" cy="24" r="1.6" fill="#111"/></svg>
<div class="abs" style="left:34px;top:250px;width:63px;height:63px;border-radius:11px;background:#f5f5f5;border:1.5px solid #dedede"></div>
<div class="ptxt" style="left:114px;top:258px;font-size:21.5px;color:#1e1e1e;letter-spacing:0.3px">F5F5F5</div>
<div class="ptxt" style="left:114px;top:290px;font-size:17.5px;color:#8a8a8a;letter-spacing:0.35px">100% · Solid</div>
<svg class="abs" style="left:464px;top:270px" width="32" height="28" viewBox="0 0 32 28"><path d="M3 13.5 Q16 -2 29 13.5 Q16 29 3 13.5 Z" fill="none" stroke="#111" stroke-width="2.2" stroke-linejoin="round"/><circle cx="16" cy="13.5" r="3.3" fill="none" stroke="#111" stroke-width="2"/></svg>
<div class="div" style="top:345.5px"></div>
<div class="ptxt sb" style="left:34px;top:378px;font-size:22.5px;color:#777;letter-spacing:0.4px">Styles</div>
<svg class="abs" style="left:466px;top:376px" width="26" height="26" viewBox="0 0 26 26"><path d="M13 1.5 V24.5 M1.5 13 H24.5" stroke="#6f6f6f" stroke-width="2"/></svg>
<div class="div" style="top:428px"></div>
<div class="ptxt sb" style="left:34px;top:460px;font-size:22.5px;color:#777;letter-spacing:0.4px">Export</div>
<svg class="abs" style="left:434px;top:458px" width="26" height="26" viewBox="0 0 26 26"><path d="M13 1.5 V24.5 M1.5 13 H24.5" stroke="#6f6f6f" stroke-width="2"/></svg>
<svg class="abs" style="left:481px;top:465px" width="14" height="12" viewBox="0 0 14 12"><path d="M2 3.5 L7 8.5 L12 3.5" fill="none" stroke="#6f6f6f" stroke-width="2"/></svg>
<div class="div" style="top:510px"></div>
<!-- help -->
<div class="abs" style="left:407px;top:1306px;width:64px;height:64px;border-radius:50%;background:#1e1e1e"></div>
<svg class="abs" style="left:419px;top:1318.5px" width="40" height="40" viewBox="0 0 40 40"><path d="M12.5 13.5 Q13 6.5 19.5 6.5 Q26 6.5 26 12.5 Q26 16 22.5 19 Q20 21.5 20 24.5" fill="none" stroke="#fff" stroke-width="1.6"/><rect x="19" y="31.5" width="2" height="2" fill="#fff"/></svg>
</div>
<!-- window corner -->
<svg class="abs" style="left:2288px;top:1390px" width="30" height="30" viewBox="0 0 30 30"><path d="M30 6 L30 30 L6 30 Q30 30 30 6 Z" fill="#000"/></svg>

<!-- toolbar -->
<div id="tshadow" class="abs"></div>
<div id="toolbar" class="abs">
<div class="abs" style="left:16px;top:16px;width:64px;height:64px;border-radius:11px;background:#0ca4c6"></div>
<svg class="abs" style="left:16px;top:16px" width="64" height="64" viewBox="0 0 64 64"><path d="M19 17.5 Q16 16.5 17.3 19.8 L28.5 46 Q30 49 31.3 46 L35 37 Q35.6 35.6 37 35 L47.5 30.5 Q50 29.3 47.5 28 Z" fill="none" stroke="#fff" stroke-width="2.3" stroke-linejoin="round"/></svg>
<svg class="abs" style="left:91px;top:43px" width="14" height="12" viewBox="0 0 14 12"><path d="M2 3 L7 8 L12 3" fill="none" stroke="#222" stroke-width="2.2"/></svg>
<div class="tdiv" style="left:130px"></div>
<!-- pen -->
<svg class="abs" style="left:168px;top:10px" width="56" height="86" viewBox="0 0 56 86">
<defs><linearGradient id="pg" x1="0" y1="0" x2="1" y2="0"><stop offset="0" stop-color="#e9e9e9"/><stop offset="0.35" stop-color="#fafafa"/><stop offset="0.75" stop-color="#e2e2e2"/><stop offset="1" stop-color="#cfcfcf"/></linearGradient>
<linearGradient id="pg2" x1="0" y1="0" x2="0" y2="1"><stop offset="0" stop-color="#fff"/><stop offset="0.55" stop-color="#fbfbfb"/><stop offset="1" stop-color="#dcdcdc"/></linearGradient>
<linearGradient id="pgb" x1="0" y1="0" x2="1" y2="0"><stop offset="0" stop-color="#1a1a1a"/><stop offset="0.5" stop-color="#3a3a3a"/><stop offset="1" stop-color="#151515"/></linearGradient></defs>
<path d="M22.3 3.8 Q27.5 2.2 32.5 3.8 Q35 17 43 27 Q50.5 32 51.6 35 L44.3 67.2 L12 67.2 L3.9 35 Q5 32 12.5 27 Q20 17 22.3 3.8 Z" fill="url(#pg2)" stroke="#cfcfcf" stroke-width="0.9"/>
<path d="M30 40 Q40 50 42 67 L14 67 Q26 58 30 40 Z" fill="#e6e6e6" opacity="0.5"/>
<line x1="27.6" y1="4" x2="27.6" y2="34" stroke="#d0d0d0" stroke-width="1.4"/>
<circle cx="27.6" cy="42" r="8" fill="#000"/>
<path d="M3.9 76.4 L3.9 72.5 Q3.9 67.2 10 67.2 L46 67.2 Q52.2 67.2 52.2 72.5 L52.2 76.4 Z" fill="url(#pg)"/>
<rect x="3.9" y="75.6" width="48.3" height="2.3" fill="#c4c4c4"/>
<rect x="3.9" y="77.9" width="48.3" height="8.1" fill="url(#pgb)"/>
</svg>
<!-- brush -->
<svg class="abs" style="left:262px;top:14px" width="60" height="82" viewBox="0 0 60 82">
<defs><linearGradient id="bg2" x1="0" y1="0" x2="0" y2="1"><stop offset="0" stop-color="#fff"/><stop offset="0.6" stop-color="#f8f8f8"/><stop offset="1" stop-color="#dadada"/></linearGradient>
<linearGradient id="bgr" x1="0" y1="0" x2="1" y2="0"><stop offset="0" stop-color="#e6e6e6"/><stop offset="0.4" stop-color="#fafafa"/><stop offset="1" stop-color="#d6d6d6"/></linearGradient></defs>
<path d="M4.5 10 Q4.5 6 12 4 Q32 -0.5 50 4 Q54.8 5.5 54.8 10 L53.7 61.4 L5.9 61.4 Z" fill="url(#bg2)" stroke="#d8d8d8" stroke-width="0.9"/>
<path d="M4.5 10 Q4.5 6 12 4 Q32 -0.5 50 4 Q54.8 5.5 54.8 10 L54.8 18.1 Q47 22.8 39 22.2 Q34 21.8 31.7 21.1 Q27 18.8 24.3 17.4 Q19 14.8 14.8 15.2 Q9 15.8 4.5 17.4 Z" fill="#111"/>
<g stroke="#d9d9d9" stroke-width="1"><line x1="11.5" y1="17" x2="12.5" y2="58"/><line x1="20.5" y1="16" x2="20.5" y2="58"/><line x1="29" y1="20" x2="28.5" y2="58"/><line x1="38" y1="22.5" x2="38" y2="58"/><line x1="46.5" y1="21" x2="46" y2="58"/></g>
<rect x="5.6" y="61.4" width="47.7" height="11.5" fill="url(#bgr)"/>
<rect x="5.6" y="64.8" width="47.7" height="2" fill="#bdbdbd"/>
<rect x="5.6" y="70.5" width="47.7" height="2.4" fill="#bdbdbd"/>
<rect x="5.6" y="72.9" width="47.7" height="9.1" fill="url(#pgb)"/>
</svg>
<!-- pencil -->
<svg class="abs" style="left:360px;top:13px" width="56" height="83" viewBox="0 0 56 83">
<defs><linearGradient id="gg" x1="0" y1="0" x2="1" y2="0"><stop offset="0" stop-color="#2a9e48"/><stop offset="0.24" stop-color="#2a9e48"/><stop offset="0.25" stop-color="#5fba72"/><stop offset="0.74" stop-color="#5fba72"/><stop offset="0.75" stop-color="#279443"/><stop offset="1" stop-color="#279443"/></linearGradient>
<linearGradient id="wg" x1="0" y1="0" x2="1" y2="0"><stop offset="0" stop-color="#f5f5f5"/><stop offset="0.45" stop-color="#fdfdfd"/><stop offset="0.6" stop-color="#e0e0e0"/><stop offset="1" stop-color="#d6d6d6"/></linearGradient></defs>
<path d="M26.5 3 Q28.1 1.8 29.7 3 L51.9 59 L51.9 61 L3.7 61 L3.7 59 Z" fill="url(#wg)" stroke="#cfcfcf" stroke-width="0.9"/>
<path d="M26.8 3 Q28.1 2 29.4 3 L35.8 18.8 L20.8 18.8 Z" fill="#2aa547"/>
<path d="M3.7 60.6 Q9 59 14.8 59.2 Q22 66 28.1 65.9 Q34 66 41.5 59.2 Q47 59 51.9 60.6 L51.9 83 L3.7 83 Z" fill="url(#gg)" stroke="#c8c8c8" stroke-width="0.6"/>
</svg>
<div class="tdiv" style="left:452px"></div>
<!-- frame -->
<svg class="abs" style="left:484px;top:30px" width="36" height="36" viewBox="0 0 36 36"><path d="M9 2 V33.5 M27 2 V33.5 M2 9 H34 M2 27 H34" stroke="#111" stroke-width="2.4"/></svg>
<svg class="abs" style="left:545px;top:43px" width="14" height="12" viewBox="0 0 14 12"><path d="M2 3 L7 8 L12 3" fill="none" stroke="#222" stroke-width="2.2"/></svg>
<svg class="abs" style="left:598px;top:30px" width="36" height="36" viewBox="0 0 36 36"><rect x="2.2" y="2.3" width="29.5" height="29.5" rx="5" fill="none" stroke="#111" stroke-width="2.4"/></svg>
<svg class="abs" style="left:659px;top:43px" width="14" height="12" viewBox="0 0 14 12"><path d="M2 3 L7 8 L12 3" fill="none" stroke="#222" stroke-width="2.2"/></svg>
<!-- text -->
<svg class="abs" style="left:712px;top:32px" width="36" height="36" viewBox="0 0 36 36"><path d="M2.5 8.5 V3 H30.5 V8.5 M16.5 3 V30.5 M10 30.5 H23" fill="none" stroke="#111" stroke-width="2.4"/></svg>
<!-- comment -->
<svg class="abs" style="left:792px;top:30px" width="36" height="36" viewBox="0 0 36 36"><path d="M3 31.5 L3 18 Q3 3 18 3 Q32 3 32 17 Q32 31.5 18 31.5 Z" fill="none" stroke="#111" stroke-width="2.3" stroke-linejoin="round"/></svg>
<!-- ai -->
<svg class="abs" style="left:870px;top:30px" width="40" height="40" viewBox="0 0 40 40"><path d="M17 3.2 C19.6 3.2 20.4 8 21.8 12.8 C26.6 14.3 32.4 15.5 32.4 17.9 C32.4 20.3 26.6 21.5 21.8 23 C20.4 27.8 19.6 32.8 17 32.8 C14.4 32.8 13.6 27.8 12.2 23 C7.4 21.5 1.7 20.3 1.7 17.9 C1.7 15.5 7.4 14.3 12.2 12.8 C13.6 8 14.4 3.2 17 3.2 Z" fill="none" stroke="#111" stroke-width="2.1" stroke-linejoin="round"/><circle cx="31" cy="4.9" r="4.2" fill="none" stroke="#111" stroke-width="2"/><path d="M31 26.5 V35.3 M26.7 30.9 H35.3" stroke="#111" stroke-width="2.1"/></svg>
<div class="tdiv" style="left:938px"></div>
<!-- mode switch -->
<div class="abs" style="left:956px;top:16px;width:220px;height:64px;border-radius:10px;background:#ccedf7"></div>
<div class="abs" style="left:960px;top:20px;width:68px;height:56px;border-radius:9px;background:#fff;box-shadow:0 1px 3px rgba(0,60,80,0.25)"></div>
<svg class="abs" style="left:974px;top:28px" width="40" height="40" viewBox="0 0 40 40"><path d="M3 18 C10 11 18 4 23 3 C28 2 29 6 26 10 L14 22.5 C10 27 11 30 15.5 27.5 L29.5 17.5 C34 15 36 18 33 22 L27.5 29.5 C24.5 34 27.5 36 33 31" fill="none" stroke="#16809e" stroke-width="2.2" stroke-linecap="round" stroke-linejoin="round"/></svg>
<svg class="abs" style="left:1048px;top:30px" width="40" height="40" viewBox="0 0 40 40"><g fill="none" stroke="#16809e" stroke-width="2.2" stroke-linejoin="round"><path d="M3.2 6 Q3.2 3.4 6 3.4 H30.3 Q33 3.4 33 6 V8 Q33 10.5 30.3 10.5 H10.3 V30 Q10.3 32.6 7.5 32.6 H6 Q3.2 32.6 3.2 30 Z"/><path d="M3.2 10.5 H10.3 M10.3 3.4 V10.5 M17.5 7.5 V10.5 M22.5 7.5 V10.5 M6.8 18.5 H10.3 M6.8 24 H10.3"/><path d="M20 21 L34 25.5 Q36 26.3 34.3 27.6 L30 30 Q29 30.6 28.5 31.6 L26.5 35.5 Q25.5 37.3 24.5 35.5 Z"/></g></svg>
<svg class="abs" style="left:1120px;top:30px" width="40" height="40" viewBox="0 0 40 40"><path d="M8.8 9.5 L1.3 18 L8.8 26.5 M27.2 9.5 L34.7 18 L27.2 26.5 M22.9 2.3 L12.7 33.2" fill="none" stroke="#16809e" stroke-width="2.2"/></svg>
</div>
</body></html>
